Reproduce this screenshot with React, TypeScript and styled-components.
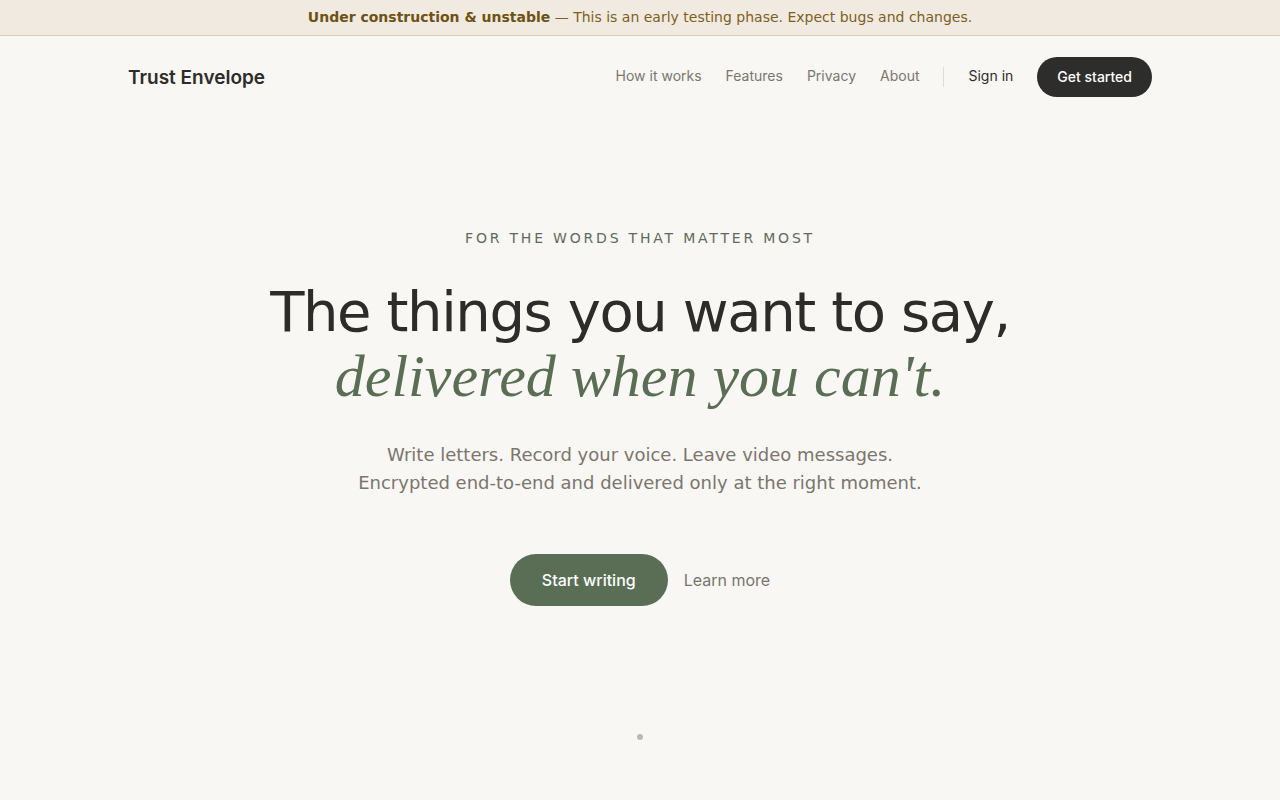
import React from 'react';
import styled, { createGlobalStyle } from 'styled-components';

const GlobalStyle = createGlobalStyle`
  * {
    box-sizing: border-box;
  }
  html,
  body {
    margin: 0;
    padding: 0;
    background: #f9f7f3;
  }
  body {
    font-family: Inter, 'Noto Sans', sans-serif;
    color: #2d2c2a;
  }
  a {
    text-decoration: none;
    color: inherit;
  }
`;

const navLinks = ['How it works', 'Features', 'Privacy', 'About'];

const App: React.FC = () => {
  return (
    <>
      <GlobalStyle />
      <Page>
        <Banner>
          <strong>Under construction &amp; unstable</strong> — This is an early testing phase. Expect
          bugs and changes.
        </Banner>
        <Header>
          <Logo href="#">Trust Envelope</Logo>
          <Nav>
            {navLinks.map((label) => (
              <NavLink key={label} href="#">
                {label}
              </NavLink>
            ))}
            <NavDivider />
            <SignIn href="#">Sign in</SignIn>
            <PillButton href="#" $variant="dark">
              Get started
            </PillButton>
          </Nav>
        </Header>
        <Hero>
          <Eyebrow>For the words that matter most</Eyebrow>
          <Headline>
            <span>The things you want to say,</span>
            <Accent>delivered when you can't.</Accent>
          </Headline>
          <Lead>
            Write letters. Record your voice. Leave video messages.
            <br />
            Encrypted end-to-end and delivered only at the right moment.
          </Lead>
          <Actions>
            <PillButton href="#" $variant="green">
              Start writing
            </PillButton>
            <TextLink href="#">Learn more</TextLink>
          </Actions>
          <ScrollDot />
        </Hero>
      </Page>
    </>
  );
};

export default App;

const Page = styled.div`
  display: flex;
  flex-direction: column;
  min-height: 800px;
  background: #f9f7f3;
`;
const Banner = styled.div`
  height: 36px;
  display: flex;
  align-items: center;
  justify-content: center;
  padding-bottom: 2px;
  white-space: pre;
  background: #f1eae0;
  border-bottom: 1px solid #decbb8;
  font-family: 'DejaVu Sans', sans-serif;
  font-size: 14px;
  color: #7d5f1e;

  strong {
    font-weight: 700;
    color: #6e5213;
  }
`;
const Header = styled.header`
  display: flex;
  align-items: center;
  justify-content: space-between;
  height: 82px;
  padding: 0 128px;
`;
const Logo = styled.a`
  font-size: 19px;
  font-weight: 600;
  color: #2d2c2a;
`;
const Nav = styled.nav`
  display: flex;
  align-items: center;
  gap: 24px;
`;
const NavLink = styled.a`
  padding-bottom: 3px;
  font-size: 14px;
  color: #7b766f;
`;
const NavDivider = styled.span`
  width: 1px;
  height: 20px;
  background: #e0dbd3;
`;
const SignIn = styled(NavLink)`
  color: #2d2c2a;
`;
const PillButton = styled.a<{ $variant: 'dark' | 'green' }>`
  display: inline-flex;
  align-items: center;
  justify-content: center;
  border-radius: 999px;
  font-weight: 500;
  color: #ffffff;
  background: ${({ $variant }) => ($variant === 'dark' ? '#2d2d2b' : '#5a6e55')};
  height: ${({ $variant }) => ($variant === 'dark' ? '40px' : '52px')};
  padding: ${({ $variant }) => ($variant === 'dark' ? '0 20px 2px' : '0 32px 1px')};
  font-size: ${({ $variant }) => ($variant === 'dark' ? '14px' : '16px')};
`;
const Hero = styled.main`
  display: flex;
  flex-direction: column;
  align-items: center;
  padding-top: 111px;
  text-align: center;
`;
const Eyebrow = styled.p`
  margin: 0;
  font-family: 'DejaVu Sans', sans-serif;
  font-size: 14px;
  line-height: 18px;
  letter-spacing: 0.2em;
  text-transform: uppercase;
  color: #5f6a5c;
`;
const Headline = styled.h1`
  display: flex;
  flex-direction: column;
  align-items: center;
  margin: 33px 0 0;
  font-family: 'DejaVu Sans', sans-serif;
  font-size: 56px;
  font-weight: 400;
  line-height: 64px;
  letter-spacing: -0.025em;
  color: #2d2c2a;
`;
const Accent = styled.em`
  display: block;
  font-family: 'Liberation Serif', serif;
  font-size: 60px;
  font-style: italic;
  line-height: 64px;
  letter-spacing: 0;
  color: #5a6e55;
`;
const Lead = styled.p`
  margin: 33px 0 0;
  font-family: 'DejaVu Sans', sans-serif;
  font-size: 18px;
  line-height: 28px;
  color: #7a756e;
`;
const Actions = styled.div`
  display: flex;
  align-items: center;
  gap: 16px;
  margin-top: 57px;
`;
const TextLink = styled.a`
  padding-bottom: 1px;
  font-size: 16px;
  color: #7a756e;
`;
const ScrollDot = styled.span`
  width: 6px;
  height: 6px;
  margin-top: 128px;
  border-radius: 50%;
  background: #bdb8b0;
`;
